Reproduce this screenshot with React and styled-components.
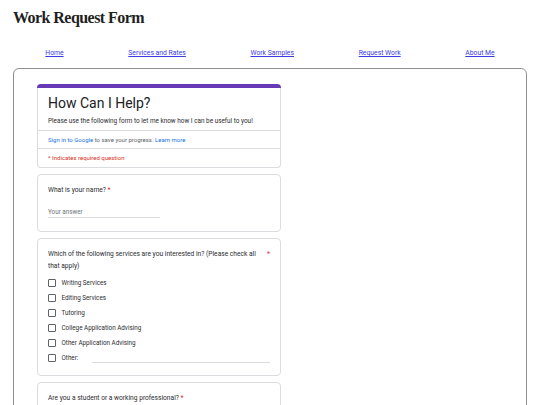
import React from 'react'
import styled, { createGlobalStyle } from 'styled-components'

const GlobalStyle = createGlobalStyle`
  body {
    margin: 0;
    background: #fff;
    font-family: Roboto, "Liberation Sans", Arial, sans-serif;
  }
`

const navLinks = ['Home', 'Services and Rates', 'Work Samples', 'Request Work', 'About Me']
const services = [
  'Writing Services',
  'Editing Services',
  'Tutoring',
  'College Application Advising',
  'Other Application Advising'
]
const roles = ['Student', 'Working Professional']

const App = () => {
  return (
    <>
      <GlobalStyle />
      <Page>
        <Title>Work Request Form</Title>
        <Nav>
          {navLinks.map(link => (
            <NavLink key={link} href='#'>{link}</NavLink>
          ))}
        </Nav>
        <Frame>
          <FormColumn>
            <HeaderCard>
              <Band />
              <Intro>
                <FormTitle>How Can I Help?</FormTitle>
                <Description>
                  Please use the following form to let me know how I can be useful to you!
                </Description>
              </Intro>
              <InfoRow>
                <BlueLink href='#'>Sign in to Google</BlueLink> to save your progress.{' '}
                <BlueLink href='#'>Learn more</BlueLink>
              </InfoRow>
              <InfoRow required>* Indicates required question</InfoRow>
            </HeaderCard>

            <Card>
              <Question>
                What is your name? <Star>*</Star>
              </Question>
              <AnswerLine>Your answer</AnswerLine>
            </Card>

            <Card>
              <QuestionRow>
                <Question>
                  Which of the following services are you interested in? (Please check all that apply)
                </Question>
                <Star>*</Star>
              </QuestionRow>
              <Options>
                {services.map(s => (
                  <Option key={s}>
                    <Box />
                    {s}
                  </Option>
                ))}
                <Option>
                  <Box />
                  Other:
                  <OtherField />
                </Option>
              </Options>
            </Card>

            <Card>
              <Question>
                Are you a student or a working professional? <Star>*</Star>
              </Question>
              <Options>
                {roles.map(r => (
                  <Option key={r}>
                    <Box round />
                    {r}
                  </Option>
                ))}
              </Options>
            </Card>
          </FormColumn>
        </Frame>
      </Page>
    </>
  )
}

export default App

const Page = styled.div`
  padding: 0 13px;
`

const Title = styled.h1`
  margin: 0;
  padding-top: 8px;
  font-family: "Roboto Slab", "Liberation Serif", serif;
  font-size: 16px;
  line-height: 20px;
  font-weight: 700;
  letter-spacing: -0.55px;
  color: #1f1f1f;
`

const Nav = styled.nav`
  display: flex;
  justify-content: space-around;
  margin-top: 20px;
  line-height: 10px;
`

const NavLink = styled.a`
  font-size: 6.8px;
  color: #3a3ae6;
  text-decoration: underline;
`

const Frame = styled.div`
  margin-top: 10px;
  border: 1px solid #8f8f8f;
  border-radius: 6px;
  padding: 15px 0 20px 23px;
`

const FormColumn = styled.div`
  width: 244px;
  display: flex;
  flex-direction: column;
  gap: 6px;
`

const Card = styled.div`
  border: 1px solid #dadce0;
  border-radius: 4px;
  padding: 9px 10px 10px;
  background: #fff;
`

const HeaderCard = styled.div`
  border: 1px solid #dadce0;
  border-top: none;
  border-radius: 4px;
  padding-bottom: 1px;
  background: #fff;
`

const Band = styled.div`
  height: 4px;
  margin: 0 -1px;
  background: #673ab7;
  border-radius: 4px 4px 0 0;
`

const Intro = styled.div`
  padding: 6px 10px 4px;
`

const FormTitle = styled.div`
  font-size: 14px;
  line-height: 18px;
  color: #202124;
`

const Description = styled.div`
  margin-top: 4px;
  font-size: 6.4px;
  line-height: 10px;
  color: #2b2c2f;
`

const InfoRow = styled.div`
  border-top: 1px solid #dadce0;
  padding: 0 10px;
  font-size: 6px;
  line-height: 17px;
  color: ${p => (p.required ? '#d93025' : '#5f6368')};
`

const BlueLink = styled.a`
  color: #1a73e8;
  text-decoration: none;
`

const QuestionRow = styled.div`
  display: flex;
  justify-content: space-between;
  gap: 4px;
`

const Question = styled.div`
  font-size: 6.65px;
  line-height: 12px;
  color: #2b2c2f;
`

const Star = styled.span`
  color: #d93025;
  font-size: 7px;
  line-height: 12px;
`

const AnswerLine = styled.div`
  width: 112px;
  margin: 11px 0 3px;
  border-bottom: 1px solid #dadce0;
  font-size: 6.3px;
  line-height: 10px;
  color: #70757a;
`

const Options = styled.div`
  margin-top: 3px;
`

const Option = styled.div`
  display: flex;
  align-items: center;
  height: 15px;
  font-size: 6.3px;
  color: #2b2c2f;
`

const Box = styled.span`
  width: 8px;
  height: 8px;
  box-sizing: border-box;
  border: 1px solid #5f6368;
  border-radius: ${p => (p.round ? '50%' : '1px')};
  margin-right: 5.5px;
  flex-shrink: 0;
`

const OtherField = styled.span`
  width: 178px;
  height: 9px;
  margin-left: auto;
  border-bottom: 1px solid #dadce0;
`
